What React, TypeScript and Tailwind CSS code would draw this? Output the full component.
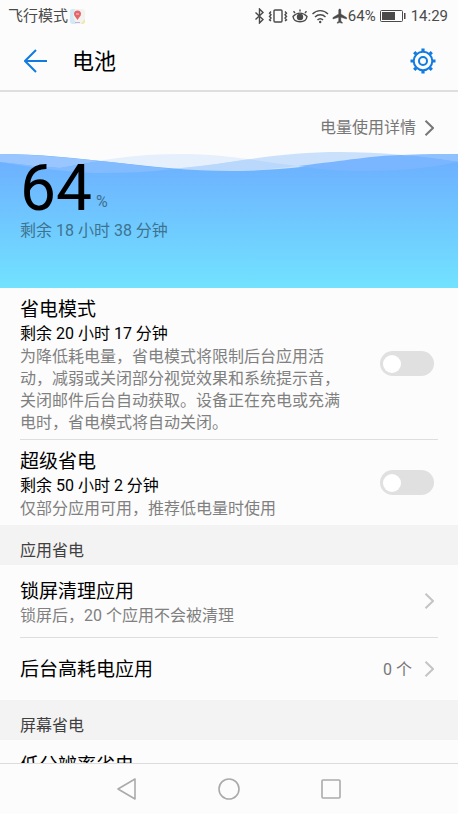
import type { ReactNode } from "react";

const airplane =
  "M21 16v-2l-8-5V3.5C13 2.67 12.33 2 11.5 2S10 2.67 10 3.5V9l-8 5v2l8-2.5V19l-2 1.5V22l3.500-1 3.500 1v-1.500L13 19v-5.500l8 2.500z";

function StatusBar() {
  return (
    <div className="flex h-8 shrink-0 items-center justify-between pr-2.5 pl-2 text-[15px] leading-5 text-[#4a4a4a]">
      <div className="flex items-center gap-0.5">
        <span>飞行模式</span>
        <svg viewBox="0 0 15 15" className="size-[15px]" aria-hidden="true">
          <rect width="15" height="15" rx="3" fill="#f3f2ee" />
          <path d="M0 3a3 3 0 0 1 3-3h2L3 7l3 8H3a3 3 0 0 1-3-3z" fill="#d3e9f4" />
          <path d="M15 10v2a3 3 0 0 1-3 3h-1z" fill="#f0e7a4" />
          <path d="M5 13h5v1H5z" fill="#b9b3ea" />
          <path d="M7.500 1.500a3.500 3.500 0 0 1 3.500 3.500c0 2-2 3.500-3.500 6C6 8.500 4 7 4 5a3.500 3.500 0 0 1 3.500-3.500z" fill="#e4646b" />
          <path d="M6 5h3" stroke="#f9c9cb" />
        </svg>
      </div>
      <div className="flex items-center">
        <svg viewBox="0 0 94 16" className="h-4 w-[94px]" fill="none" stroke="#4a4a4a" strokeWidth="1.400" aria-hidden="true">
          <path d="M1.500 4.500l7.500 7L5.500 15V1L9 4.500l-7.500 7" />
          <rect x="20" y="2" width="8" height="12" rx="1" />
          <path d="M17 3.500L15.500 5.200l1.500 1.600-1.500 1.700 1.500 1.600-1.500 1.700 1.500 1.200M31 3.500l1.500 1.700L31 6.800l1.500 1.700-1.500 1.600 1.500 1.700-1.500 1.200" />
          <path d="M39 8.500c4-4.500 10-4.500 14 0-1 7-13 7-14 0zM41 5l-1.500-1.800M46 3.500V1.500M51 5l1.500-1.800" />
          <circle cx="46" cy="9" r="2.500" fill="#4a4a4a" />
          <path d="M58.500 6c4.500-4.500 11-4.500 15.500 0M61 9c3-3 7.500-3 10.500 0M63.500 12c1.500-1.700 4-1.700 5.500 0" />
          <circle cx="66.200" cy="14" r="1.200" fill="#4a4a4a" stroke="none" />
          <g transform="translate(77.500 -0.500) scale(0.720)">
            <path d={airplane} fill="#4a4a4a" stroke="#4a4a4a" strokeWidth="0.600" />
          </g>
        </svg>
        <span>64%</span>
        <svg viewBox="0 0 26 12" className="ml-1 h-3 w-[26px]" aria-hidden="true">
          <rect x="0.500" y="0.500" width="22" height="11" rx="1" fill="none" stroke="#4a4a4a" />
          <path d="M2 2h13v8H2zM24 3h1.500v6H24z" fill="#4a4a4a" />
        </svg>
        <span className="ml-[5px]">14:29</span>
      </div>
    </div>
  );
}

function GearIcon() {
  return (
    <svg viewBox="0 0 26 26" className="size-[26px]" fill="none" stroke="#127be0" aria-hidden="true">
      <circle cx="13" cy="13" r="9.300" strokeWidth="2" />
      <circle cx="13" cy="13" r="4" strokeWidth="2" />
      <g strokeWidth="3.200">
        <path d="M13 .5V4M13 22v3.500M.5 13H4M22 13h3.500" />
        <path d="M4.200 4.200l2 2M19.800 19.800l2 2M4.200 21.800l2-2M19.800 6.200l2-2" />
      </g>
    </svg>
  );
}

function Header() {
  return (
    <header className="flex h-[60px] shrink-0 items-center border-b-2 border-[#dfdfdf] pr-[22px] pl-6">
      <button type="button" aria-label="返回">
        <svg viewBox="0 0 24 24" className="size-6" fill="none" stroke="#127be0" strokeWidth="2" aria-hidden="true">
          <path d="M12 1L1 12l11 11M1 12h22" />
        </svg>
      </button>
      <h1 className="ml-6 flex-1 pt-0.5 text-[22px] leading-8">电池</h1>
      <button type="button" aria-label="设置">
        <GearIcon />
      </button>
    </header>
  );
}

function Chevron({ color }: { color: string }) {
  return (
    <svg viewBox="0 0 10 16" className="h-4 w-2.5 shrink-0" fill="none" stroke={color} strokeWidth="2" aria-hidden="true">
      <path d="M1.500 .8L9 8l-7.500 7.200" />
    </svg>
  );
}

function Waves() {
  return (
    <svg viewBox="0 0 458 137" preserveAspectRatio="none" className="absolute inset-0 size-full" aria-hidden="true">
      <defs>
        <linearGradient id="water" x1="0" y1="14" x2="0" y2="137" gradientUnits="userSpaceOnUse">
          <stop offset="0" stopColor="#6db2ff" />
          <stop offset="1" stopColor="#72e2ff" />
        </linearGradient>
        <clipPath id="overlap">
          <path d="M0 11C35 17 60 22 100 22S190 17 230 11 300 1 340 1 420 5 458 11V24H0z" />
        </clipPath>
      </defs>
      <path d="M60 17C100 9 135 3 180 3S250 9 298 15 330 20 365 20 430 16 458 11V22H60z" fill="#e6f0fd" />
      <path d="M0 11C35 17 60 22 100 22S190 17 230 11 300 1 340 1 420 5 458 11V24H0z" fill="#cbe1fb" />
      <path d="M60 17C100 9 135 3 180 3S250 9 298 15L230 22H60z" fill="#bad7fc" clipPath="url(#overlap)" />
      <path d="M0 3C80 3 150 20 230 20S370 3 458 3V137H0z" fill="url(#water)" />
      <path d="M0 3C35 3 70 7 100 10L60 17Q30 15 0 11z" fill="#99c6ff" />
      <path d="M60 17Q80 13 100 10C130 13 150 16 173 18 150 21 125 22 100 22S35 17 0 11Q30 15 60 17z" fill="#83bbff" />
      <path d="M458 3C435 3 420 3 401 4 420 6 440 8 458 11z" fill="#8fc1ff" />
      <path d="M298 15C350 9 370 5 401 4 420 5 440 8 458 11 430 17 400 20 365 20S320 18 298 15z" fill="#79b6ff" />
    </svg>
  );
}

function Hero() {
  return (
    <section>
      <div className="flex h-[59px] items-center justify-end pt-3 pr-6">
        <a href="#details" className="flex items-center gap-2 text-[16px] leading-6 text-[#777]">
          电量使用详情
          <Chevron color="#777" />
        </a>
      </div>
      <div className="relative h-[137px] px-5 pt-2">
        <Waves />
        <div className="relative flex items-end gap-1">
          <span className="text-[64px] leading-[60px]">64</span>
          <span className="mb-[5px] text-[16px] leading-6 text-[#3e6f8e]">%</span>
        </div>
        <p className="relative text-[16px] leading-6 text-[#3e7390]">剩余 18 小时 38 分钟</p>
      </div>
    </section>
  );
}

function SavingMode({ id, title, remaining, children }: { id: string; title: string; remaining: string; children: ReactNode }) {
  return (
    <div className="flex items-center justify-between">
      <label htmlFor={id} className="w-[340px] pt-2.5 pb-[5px]">
        <span className="block text-[19px] leading-6">{title}</span>
        <span className="block text-[16px] leading-6">{remaining}</span>
        <span className="block text-[16px] leading-[22px] text-[#808080]">{children}</span>
      </label>
      <input
        id={id}
        type="checkbox"
        role="switch"
        className="mr-1 flex h-[25px] w-[54px] shrink-0 appearance-none items-center rounded-full bg-[#e0e0e0] px-[3px] before:size-[18px] before:rounded-full before:bg-white checked:justify-end checked:bg-[#127be0]"
      />
    </div>
  );
}

function SectionTitle({ children }: { children: ReactNode }) {
  return <h2 className="flex h-10 items-center bg-[#f3f3f3] px-5 pt-3 text-[16px] leading-6 text-[#404040]">{children}</h2>;
}

export default function App() {
  return (
    <div className="flex h-screen flex-col overflow-hidden bg-[#fcfcfc] font-['Roboto','Noto_Sans_CJK_SC',sans-serif] text-black">
      <StatusBar />
      <Header />
      <main className="min-h-0 flex-1 overflow-hidden">
        <Hero />
        <div className="mx-5 border-b border-[#dedede]">
          <SavingMode id="saving" title="省电模式" remaining="剩余 20 小时 17 分钟">
            为降低耗电量，省电模式将限制后台应用活
            <br />
            动，减弱或关闭部分视觉效果和系统提示音，
            <br />
            关闭邮件后台自动获取。设备正在充电或充满
            <br />
            电时，省电模式将自动关闭。
          </SavingMode>
        </div>
        <div className="mx-5">
          <SavingMode id="ultra" title="超级省电" remaining="剩余 50 小时 2 分钟">
            仅部分应用可用，推荐低电量时使用
          </SavingMode>
        </div>
        <SectionTitle>应用省电</SectionTitle>
        <a href="#lock-screen" className="mx-5 flex h-[73px] items-center justify-between border-b border-[#dedede] pr-1">
          <span className="pt-1.5">
            <span className="block text-[19px] leading-6">锁屏清理应用</span>
            <span className="block text-[16px] leading-6 text-[#808080]">锁屏后，20 个应用不会被清理</span>
          </span>
          <Chevron color="#c4c4c4" />
        </a>
        <a href="#background" className="mx-5 flex h-[62px] items-center pr-1">
          <span className="flex-1 pt-0.5 text-[19px] leading-6">后台高耗电应用</span>
          <span className="mr-3 pt-0.5 text-[16px] leading-6 text-[#777]">0 个</span>
          <Chevron color="#c4c4c4" />
        </a>
        <SectionTitle>屏幕省电</SectionTitle>
        <div className="mx-5 pt-3.5">
          <span className="block text-[19px] leading-6">低分辨率省电</span>
        </div>
      </main>
      <nav className="flex h-[51px] shrink-0 items-center justify-center gap-20 border-t border-[#dcdcdc]">
        <button type="button" aria-label="返回">
          <svg viewBox="0 0 22 22" className="size-[22px]" fill="none" stroke="#aaa" strokeWidth="1.600" strokeLinejoin="round" aria-hidden="true">
            <path d="M19 1v20L2 11z" />
          </svg>
        </button>
        <button type="button" aria-label="主屏幕">
          <svg viewBox="0 0 22 22" className="size-[22px]" fill="none" stroke="#aaa" strokeWidth="1.600" aria-hidden="true">
            <circle cx="11" cy="11" r="10" />
          </svg>
        </button>
        <button type="button" aria-label="最近任务">
          <svg viewBox="0 0 22 22" className="size-[22px]" fill="none" stroke="#aaa" strokeWidth="1.600" aria-hidden="true">
            <rect x="2" y="2" width="18" height="18" rx="1" />
          </svg>
        </button>
      </nav>
    </div>
  );
}
